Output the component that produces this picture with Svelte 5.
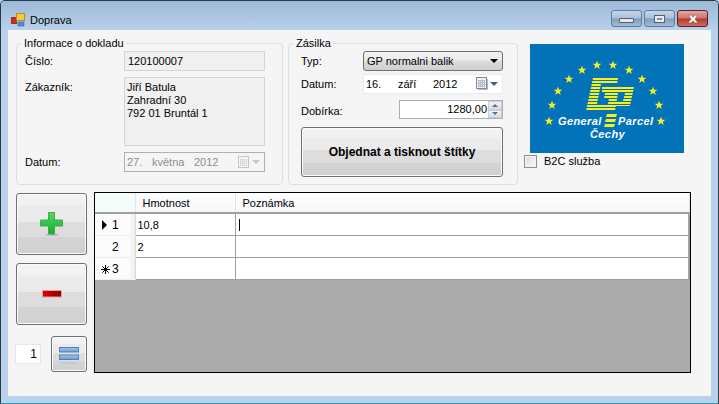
<script>
  const rows = [
    { marker: 'current', no: 1, weight: '10,8', caret: true },
    { marker: '', no: 2, weight: '2', caret: false },
    { marker: 'new', no: 3, weight: '', caret: false }
  ]
  // star positions inside the logo
  const stars = [
    [19, 77], [22, 61], [28, 47], [39, 35], [52, 26], [67, 21],
    [83, 21], [99, 26], [112, 35], [123, 47], [129, 61], [131, 77]
  ]
  const stripes = Array.from({ length: 12 }, (_, i) => 36 + i * 3)
  const starPoints = '0,-4.4 1.1,-1.3 4.4,-1.3 1.8,.7 2.8,4 0,1.9 -2.8,4 -1.8,.7 -4.4,-1.3 -1.1,-1.3'
</script>

<div class="window">
  <header class="titlebar">
    <svg class="app-icon" width="16" height="16" viewBox="0 0 16 16">
      <rect x="0.5" y="5.5" width="5" height="6" fill="#d8231f" stroke="#8a3a20" />
      <rect x="5.5" y="1.5" width="8" height="7" fill="#f7c93e" stroke="#c08a20" />
      <rect x="7" y="10" width="6" height="4" fill="#4d8fdb" stroke="#3a66a8" stroke-width=".6" />
    </svg>
    <span class="title">Doprava</span>
    <div class="captions">
      <div class="cap"><span class="min-glyph"></span></div>
      <div class="cap"><span class="max-glyph"></span></div>
      <div class="cap close">
        <svg width="14" height="10" viewBox="0 0 14 10">
          <path d="M2 1h3l2 2 2-2h3L9 5l3 4H9L7 7 5 9H2l3-4z" fill="#f2f2f2" stroke="#8a4b48" stroke-width=".6" />
        </svg>
      </div>
    </div>
  </header>

  <main class="client">
    <section class="top">
      <fieldset class="group doklad">
        <legend>Informace o dokladu</legend>
        <div class="form form-doklad">
          <span>Číslo:</span>
          <div class="ro">120100007</div>
          <span class="lab-top">Zákazník:</span>
          <div class="ro ro-multi">Jiří Batula<br />Zahradní 30<br />792 01 Bruntál 1</div>
          <span>Datum:</span>
          <div class="date disabled">
            <span class="d1">27.</span><span class="d2">května</span><span>2012</span>
            <svg class="cal" width="12" height="13" viewBox="0 0 12 13">
              <rect x=".5" y=".5" width="10" height="11" fill="#f4f5f6" stroke="#c4c6c8" />
              <path d="M2 3.5h7M2 5.5h7M2 7.5h7M2 9.5h7M2.5 3v7M4.5 3v7M6.5 3v7M8.5 3v7" stroke="#d8dadc" />
            </svg>
            <i class="arrow gray"></i>
          </div>
        </div>
      </fieldset>

      <fieldset class="group zasilka">
        <legend>Zásilka</legend>
        <div class="form form-zasilka">
          <span>Typ:</span>
          <div class="select">GP normalni balik<i class="arrow black"></i></div>
          <span>Datum:</span>
          <div class="date">
            <span class="d3">16.</span><span class="d4">září</span><span>2012</span>
            <svg class="cal" width="12" height="13" viewBox="0 0 12 13">
              <rect x=".5" y=".5" width="10" height="11" fill="#eef1f5" stroke="#7d8a99" />
              <path d="M2 3.5h7M2 5.5h7M2 7.5h7M2 9.5h7M2.5 3v7M4.5 3v7M6.5 3v7M8.5 3v7" stroke="#b4bcc6" />
              <path d="M11.5 2v10.5H2" fill="none" stroke="#b8b8b8" />
            </svg>
            <i class="arrow blue"></i>
          </div>
          <span class="lab-end">Dobírka:</span>
          <div class="spin">
            <span class="spin-val">1280,00</span>
            <div class="spin-btns">
              <b><i class="tri up"></i></b>
              <b><i class="tri down"></i></b>
            </div>
          </div>
          <button class="btn order">Objednat a tisknout štítky</button>
        </div>
      </fieldset>

      <div class="side">
        <svg class="logo" width="154" height="109" viewBox="0 0 154 109">
          <rect width="154" height="109" fill="#0272b9" />
          {#each stars as [x, y]}
            <polygon points={starPoints} transform="translate({x} {y})" fill="#f6ee1e" />
          {/each}
          <path d="M63 34H88L87 40H71L67 60H78L79 54H74L75 49H88L85 67H56z" fill="#f6ee1e" />
          <path d="M72 43H104L100 62H84L85 57H93L95 49H72z" fill="#f6ee1e" />
          {#each stripes as y}
            <rect x="50" {y} width="60" height="1" fill="#0272b9" />
          {/each}
          <path d="M77 70h10l-1 3h-10zM76 75h10l-1 3h-10zM75 80h10l-1 3h-10z" fill="#f6ee1e" />
          <text class="logo-text" x="28" y="81">General</text>
          <text class="logo-text" x="88" y="81">Parcel</text>
          <text class="logo-text" x="60" y="94">Čechy</text>
        </svg>
        <label class="check"><span class="box"></span>B2C služba</label>
      </div>
    </section>

    <section class="bottom">
      <div class="tools">
        <button class="btn big" aria-label="add">
          <svg width="24" height="24" viewBox="0 0 24 24">
            <defs>
              <linearGradient id="gr" x1="0" y1="0" x2="0" y2="1">
                <stop offset="0" stop-color="#54d862" /><stop offset="1" stop-color="#14ac30" />
              </linearGradient>
            </defs>
            <ellipse cx="12" cy="22.7" rx="7" ry="1" fill="#b5b5b5" />
            <path d="M8.5 .5h6v7.5h8v6h-8v8h-6v-8h-8v-6h8z" fill="url(#gr)" stroke="#3fa94a" />
          </svg>
        </button>
        <button class="btn big minus-btn" aria-label="remove">
          <svg width="20" height="8" viewBox="0 0 20 8">
            <defs>
              <linearGradient id="rd" x1="0" y1="0" x2="1" y2="0">
                <stop offset="0" stop-color="#e00000" /><stop offset="1" stop-color="#8c0000" />
              </linearGradient>
            </defs>
            <rect x=".5" y=".5" width="19" height="6.5" fill="url(#rd)" stroke="#e8a0a0" />
          </svg>
        </button>
        <div class="qty">
          <div class="qty-input">1</div>
          <button class="btn small" aria-label="same">
            <svg width="22" height="20" viewBox="0 0 22 20">
              <defs>
                <linearGradient id="bl" x1="0" y1="0" x2="0" y2="1">
                  <stop offset="0" stop-color="#a9c6ea" /><stop offset="1" stop-color="#6c98d2" />
                </linearGradient>
              </defs>
              <rect x="1.5" y="1.5" width="19" height="4.5" fill="url(#bl)" stroke="#4f80bf" />
              <rect x="1.5" y="9" width="19" height="4.5" fill="url(#bl)" stroke="#4f80bf" />
              <ellipse cx="11" cy="17" rx="9" ry="1" fill="#c8c8c8" />
            </svg>
          </button>
        </div>
      </div>

      <div class="grid-box">
        <table>
          <thead>
            <tr>
              <th class="corner"></th>
              <th class="col-w">Hmotnost</th>
              <th>Poznámka</th>
            </tr>
          </thead>
          <tbody>
            {#each rows as row}
              <tr>
                <td class="rowhead">
                  {#if row.marker === 'current'}<i class="cur"></i>{/if}
                  {#if row.marker === 'new'}
                    <svg class="star" width="9" height="9" viewBox="0 0 9 9">
                      <path d="M4.5 0v9M0 4.5h9M1.3 1.3l6.4 6.4M7.7 1.3L1.3 7.7" stroke="#000" />
                    </svg>
                  {/if}
                  <span class="no">{row.no}</span>
                </td>
                <td>{row.weight}</td>
                <td>{#if row.caret}<span class="caret"></span>{/if}</td>
              </tr>
            {/each}
          </tbody>
        </table>
      </div>
    </section>
  </main>
</div>

<style>
:global(body) {
  margin: 0;
  background: #b9d1ea;
}

.window {
  width: 719px;
  height: 404px;
  box-sizing: border-box;
  display: flex;
  flex-direction: column;
  overflow: hidden;
  border: 1px solid #2c3a44;
  border-bottom-color: #1e9fc0;
  border-radius: 5px 5px 0 0;
  background: #b9d1ea;
  font-family: "Liberation Sans", Arial, sans-serif;
  font-size: 11px;
  color: #000;
}

.titlebar {
  height: 29px;
  box-sizing: border-box;
  flex: none;
  display: flex;
  align-items: center;
  padding: 8px 2px 0 10px;
  background: linear-gradient(#9cb9d9, #b9d1ea);
}

.app-icon {
  margin-right: 3px;
}

.captions {
  margin: 1px 8px 0 auto;
  display: flex;
  gap: 2px;
  align-self: flex-start;
}

.cap {
  width: 29px;
  height: 15px;
  border: 1px solid #5f7c99;
  border-radius: 3px;
  background: linear-gradient(#c6d6e8 0, #a9c0da 48%, #7e9dbf 52%, #a2bcd7 100%);
  display: flex;
  align-items: center;
  justify-content: center;
}

.close {
  border-color: #5d1f28;
  background: linear-gradient(#e3a8a0 0, #cf7468 48%, #b8392a 52%, #cb6e5f 100%);
}

.min-glyph {
  width: 13px;
  height: 3px;
  margin-top: 4px;
  background: #e3e8ed;
  border: 1px solid #55606c;
  border-radius: 1px;
}

.max-glyph {
  width: 5px;
  height: 2px;
  border: 2px solid #e8ecf0;
  outline: 1px solid #55606c;
  background: #7b8fa5;
}

.client {
  flex: 1;
  margin: 0 7px 7px;
  background: #f5f5f5;
  display: flex;
  flex-direction: column;
  min-height: 0;
}

.top {
  display: flex;
  padding: 6px 0 0 8px;
  height: 156px;
  box-sizing: border-box;
}

.group {
  margin: 0;
  padding: 0;
  border: 1px solid #d8dee3;
  border-radius: 4px;
  box-sizing: border-box;
  height: 149px;
  min-width: 0;
}

.group legend {
  margin-left: 5px;
  padding: 0 2px;
  line-height: 14px;
}

.doklad {
  width: 267px;
  margin-right: 5px;
}

.zasilka {
  width: 230px;
  margin-right: 6px;
}

.form {
  display: grid;
  align-items: center;
}

.form-doklad {
  padding: 1px 0 0 8px;
  grid-template-columns: 99px 141px;
  row-gap: 6px;
}

.lab-top {
  align-self: start;
  margin-top: 4px;
}

.ro {
  height: 20px;
  box-sizing: border-box;
  border: 1px solid #d3d5d7;
  background: #f0f0f0;
  padding: 2px 3px;
  line-height: 14px;
}

.ro-multi {
  height: 69px;
  padding: 3px 2px;
  line-height: 13px;
}

.date {
  height: 20px;
  box-sizing: border-box;
  display: flex;
  align-items: center;
  padding-left: 2px;
  background: #fff;
  border: 1px solid #e6edf2;
}

.date.disabled {
  background: #f5f5f5;
  border-color: #b0b0b0;
  color: #8f8f8f;
}

.d1 {
  width: 25px;
}

.d2 {
  width: 42px;
}

.d3 {
  width: 32px;
}

.d4 {
  width: 35px;
}

.cal {
  margin-left: auto;
}

.arrow {
  display: block;
  width: 0;
  height: 0;
  border: 4px solid transparent;
  border-bottom-width: 0;
  border-top-width: 4px;
  margin: 0 4px 0 2px;
}

.arrow.gray {
  border-top-color: #c9c9c9;
}

.arrow.blue {
  border-top-color: #3f5f8f;
}

.arrow.black {
  border-top-color: #000;
  margin: 0 1px 0 auto;
}

.form-zasilka {
  padding: 1px 0 0 12px;
  grid-template-columns: 62px 140px;
  grid-template-rows: 20px 19px 23px 55px;
  row-gap: 3px;
}

.lab-end {
  align-self: end;
  padding-bottom: 2px;
}

.select {
  height: 20px;
  box-sizing: border-box;
  display: flex;
  align-items: center;
  padding: 0 3px;
  border: 1px solid #707070;
  border-radius: 3px;
  background: linear-gradient(#f2f2f2 0, #ebebeb 45%, #dcdcdc 50%, #cfcfcf 100%);
}

.spin {
  justify-self: end;
  align-self: end;
  width: 104px;
  height: 19px;
  box-sizing: border-box;
  display: flex;
  background: #fff;
  border: 1px solid #abadb3;
}

.spin-val {
  flex: 1;
  text-align: right;
  padding-right: 1px;
  line-height: 16px;
}

.spin-btns {
  width: 14px;
  display: flex;
  flex-direction: column;
}

.spin-btns b {
  flex: 1;
  display: flex;
  align-items: center;
  justify-content: center;
  border: 1px solid #c9cfd6;
  background: linear-gradient(#f3f3f3, #d8dde3);
}

.tri {
  width: 0;
  height: 0;
  border: 3px solid transparent;
}

.tri.up {
  border-top-width: 0;
  border-bottom-color: #4f6f9f;
}

.tri.down {
  border-bottom-width: 0;
  border-top-color: #4f6f9f;
}

.btn {
  margin: 0;
  padding: 0;
  box-sizing: border-box;
  font: inherit;
  color: #000;
  border: 1px solid #707070;
  border-radius: 3px;
  box-shadow: inset 0 0 0 1px #fbfbfb;
  background: linear-gradient(#f4f4f4 0, #f0f0f0 20%, #ebebeb 20%, #ebebeb 46%, #dddddd 46%, #dddddd 72%, #d4d4d4 72%, #d0d0d0 100%);
  display: flex;
  align-items: center;
  justify-content: center;
}

.order {
  grid-column: 1 / 3;
  height: 50px;
  margin-top: 5px;
  font-size: 12px;
  font-weight: bold;
}

.side {
  width: 167px;
  display: flex;
  flex-direction: column;
  align-items: flex-start;
  padding-top: 8px;
}

.logo {
  display: block;
  margin-left: 6px;
}

.logo-text {
  font-family: "Liberation Sans", Arial, sans-serif;
  font-size: 11px;
  font-weight: bold;
  font-style: italic;
  letter-spacing: .4px;
  fill: #fff;
}

.check {
  display: flex;
  align-items: center;
  line-height: 14px;
  margin-top: 1px;
}

.box {
  width: 11px;
  height: 11px;
  margin-right: 7px;
  border: 1px solid #8e8f8f;
  background: linear-gradient(135deg, #dcdcdc, #fafafa);
  box-shadow: inset 0 0 0 1px #f4f4f4;
}

.bottom {
  display: flex;
  padding: 6px 0 0 8px;
}

.tools {
  width: 71px;
  margin-right: 7px;
  padding-top: 1px;
  display: flex;
  flex-direction: column;
}

.big {
  width: 71px;
  height: 62px;
}

.minus-btn {
  margin-top: 8px;
}

.qty {
  display: flex;
  align-items: center;
  margin: 11px 0 0 -1px;
  gap: 10px;
}

.qty-input {
  width: 26px;
  height: 20px;
  box-sizing: border-box;
  background: #fff;
  border: 1px solid #e3e8ec;
  text-align: right;
  padding: 2px 3px 0 0;
  line-height: 14px;
  font-size: 12px;
}

.small {
  width: 36px;
  height: 36px;
  padding-top: 3px;
}

.grid-box {
  width: 597px;
  height: 181px;
  box-sizing: border-box;
  border: 1px solid #000;
  background: #ababab;
}

table {
  width: 100%;
  table-layout: fixed;
  border-collapse: collapse;
  font-size: 11px;
}

th {
  box-sizing: border-box;
  height: 20px;
  padding: 0 0 0 7px;
  text-align: left;
  font-weight: normal;
  border-right: 1px solid #e2e4e8;
  border-bottom: 2px solid #a0a0a0;
  background: linear-gradient(#fdfdfd, #f6f7fb);
}

.corner {
  width: 40px;
  background: #f4fbfb;
}

.col-w {
  width: 100px;
}

td {
  height: 21px;
  padding: 0 0 0 2px;
  background: #fff;
  border-right: 1px solid #a0a0a0;
  border-bottom: 1px solid #a0a0a0;
}

td:last-child {
  border-right-width: 2px;
}

.rowhead {
  position: relative;
  padding: 0;
  background: linear-gradient(to right, #fcfcfc 85%, #ececec);
  border-right: 1px solid #d8d8d8;
  border-bottom-color: #eee;
  font-size: 12px;
}

.no {
  display: block;
  margin-left: 17px;
}

.cur {
  position: absolute;
  left: 7px;
  top: 6px;
  border: 5px solid transparent;
  border-left: 5px solid #000;
  border-right-width: 0;
}

.star {
  position: absolute;
  left: 6px;
  top: 7px;
}

.caret {
  display: inline-block;
  width: 1px;
  height: 12px;
  background: #000;
  vertical-align: middle;
  margin-left: 1px;
}
</style>
